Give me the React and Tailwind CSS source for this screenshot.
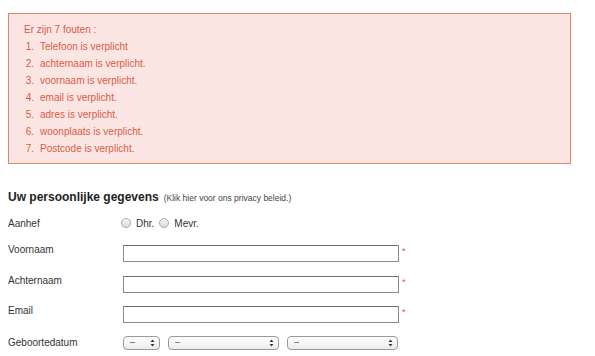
import React from 'react';

// Validation summary + personal details form (static recreation).

const ERRORS = [
  'Telefoon is verplicht',
  'achternaam is verplicht.',
  'voornaam is verplicht.',
  'email is verplicht.',
  'adres is verplicht.',
  'woonplaats is verplicht.',
  'Postcode is verplicht.',
];

function Radio({ label }) {
  return (
    <label className="flex items-center">
      <span className="w-[10px] h-[10px] rounded-full border border-[#a9a9a9] bg-gradient-to-b from-[#f6f6f6] to-[#dcdcdc]" />
      <span className="ml-[5px]">{label}</span>
    </label>
  );
}

function TextRow({ label }) {
  return (
    <div className="flex items-start">
      <div className="w-[115px] leading-[10px]">{label}</div>
      <div className="w-[276px] h-[17px] border border-[#8c8c8c] border-t-[#6f6f6f] bg-white" />
      <span className="ml-[3px] mt-[1px] text-[9px] text-[#e0503a] leading-[10px]">*</span>
    </div>
  );
}

function Select({ width }) {
  return (
    <div
      className={`${width} h-[14px] rounded-[4px] border border-[#9a9a9a] bg-gradient-to-b from-white to-[#ececec] flex items-center justify-between pl-[6px] pr-[4px]`}
    >
      <span className="text-[9px] leading-[9px] text-[#444]">–</span>
      <svg width="5" height="8" viewBox="0 0 5 8" className="text-[#333]">
        <path d="M2.5 0.5 L4.5 3 L0.5 3 Z" fill="currentColor" />
        <path d="M2.5 7.5 L4.5 5 L0.5 5 Z" fill="currentColor" />
      </svg>
    </div>
  );
}

export default function App() {
  return (
    <div className="min-h-[356px] w-[595px] bg-white font-['Liberation_Sans',Arial,sans-serif] text-[#333]">
      <div className="pt-[13px] pl-[8px]">
        <div className="w-[563px] h-[151px] border border-[#e4846c] bg-[#fce6e4] pl-[15px] pt-[7px] text-[10px] text-[#dd5a44]">
          <div className="leading-[17px]">Er zijn 7 fouten :</div>
          {ERRORS.map((e, i) => (
            <div key={i} className="flex leading-[17px]">
              <span className="w-[10px] text-right">{i + 1}.</span>
              <span className="ml-[6px]">{e}</span>
            </div>
          ))}
        </div>

        <div className="mt-[25px] h-[16px] flex items-baseline leading-[16px]">
          <span className="text-[12px] font-bold text-[#222]">Uw persoonlijke gegevens</span>
          <span className="ml-[5px] text-[8.5px] text-[#444]">(Klik hier voor ons privacy beleid.)</span>
        </div>

        <div className="text-[10px]">
          <div className="mt-[10px] h-[16px] flex items-center">
            <div className="w-[113px]">Aanhef</div>
            <Radio label="Dhr." />
            <div className="ml-[5px]">
              <Radio label="Mevr." />
            </div>
          </div>

          <div className="mt-[14px]">
            <TextRow label="Voornaam" />
          </div>
          <div className="mt-[14px]">
            <TextRow label="Achternaam" />
          </div>
          <div className="mt-[13px]">
            <TextRow label="Email" />
          </div>

          <div className="mt-[12px] flex items-center">
            <div className="w-[115px]">Geboortedatum</div>
            <div className="flex gap-[8px]">
              <Select width="w-[37px]" />
              <Select width="w-[111px]" />
              <Select width="w-[111px]" />
            </div>
          </div>
        </div>
      </div>
    </div>
  );
}
